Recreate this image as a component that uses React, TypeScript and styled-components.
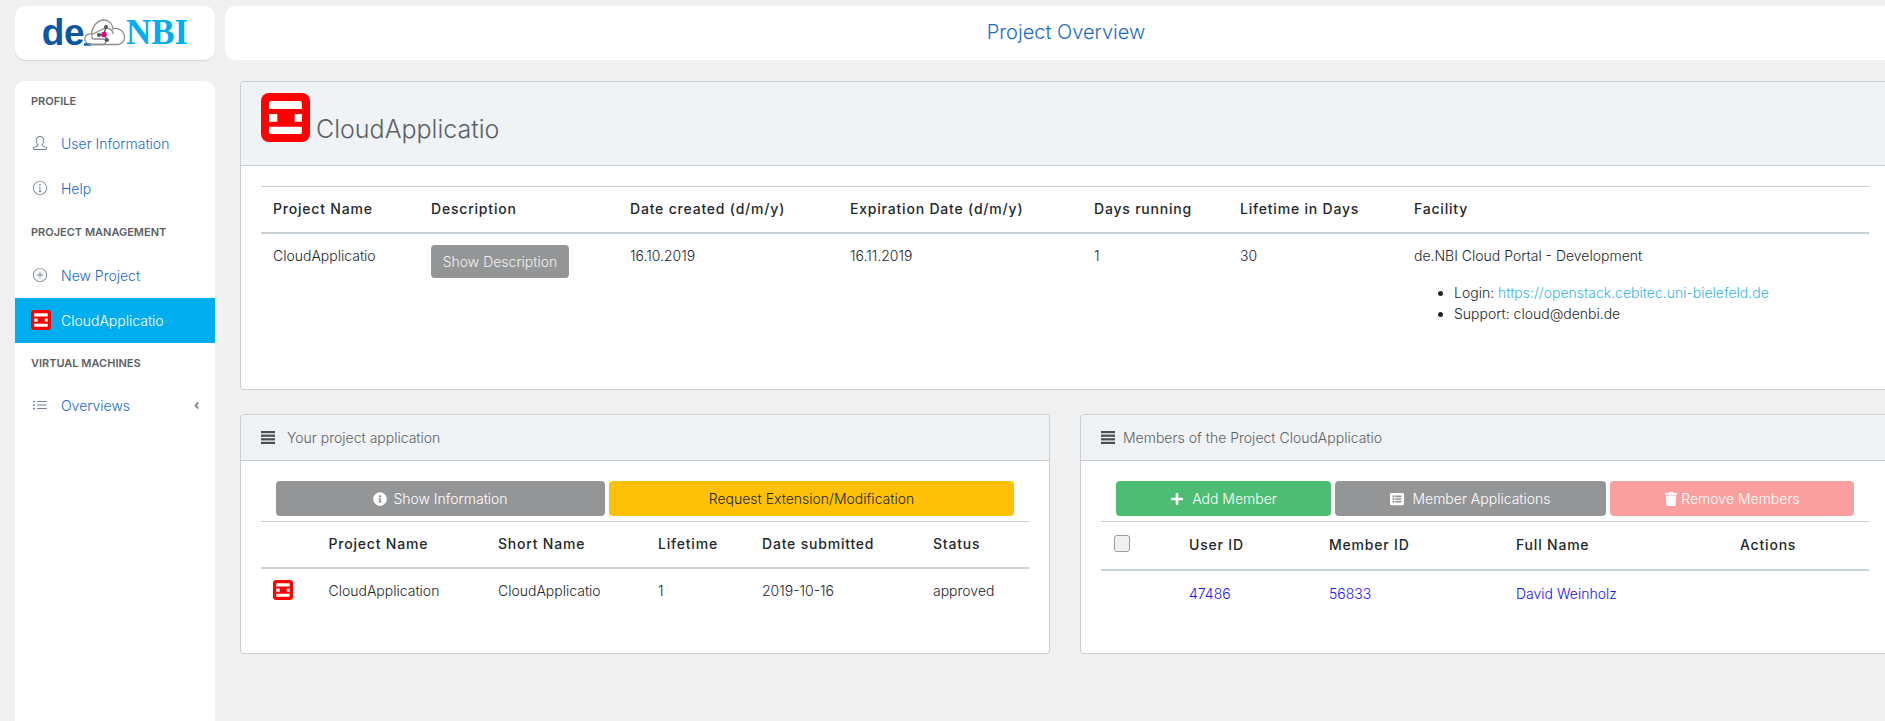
import React from "react";
import styled, {createGlobalStyle} from "styled-components";
import {SlUser, SlInfo, SlPlus, SlList} from "react-icons/sl";
import {FaInfoCircle, FaPlus, FaListAlt, FaTrash, FaAngleLeft} from "react-icons/fa";

const GlobalStyle = createGlobalStyle`
    html, body {
        margin: 0;
        height: 100%;
        overflow: hidden;
        background: #f0f0f0;
        font-family: Inter, Lato, sans-serif;
        font-size: 14px;
        font-weight: 300;
        line-height: 21px;
        color: #23282c;
    }
`;

const Page = styled.div`
    width: 1885px;
    height: 721px;
    overflow: hidden;
`;

const TopBar = styled.header`
    display: flex;
    gap: 10px;
    padding: 6px 0 0 15px;
    height: 54px;
    margin-bottom: 21px;
`;

const LogoBox = styled.div`
    flex: 0 0 200px;
    display: flex;
    align-items: center;
    justify-content: center;
    padding-bottom: 2px;
    background: #fff;
    border-radius: 10px;
    box-shadow: 0 1px 1px #d3d7db;
`;

const LogoDe = styled.span`
    font-family: "Liberation Sans", sans-serif;
    font-weight: 700;
    font-size: 37px;
    letter-spacing: -0.5px;
    line-height: 1;
    color: #0b57a4;
`;

const LogoNbi = styled.span`
    font-family: "Liberation Serif", serif;
    font-weight: 700;
    font-size: 35px;
    line-height: 1;
    color: #00aeef;
`;

const TitleBox = styled.div`
    flex: 0 0 1682px;
    display: flex;
    align-items: center;
    justify-content: center;
    padding-bottom: 2px;
    box-sizing: border-box;
    background: #fff;
    border-radius: 10px 0 0 10px;
    font-size: 20px;
    color: #1a6bc4;
`;

const Body = styled.div`
    display: flex;
    gap: 25px;
    padding-left: 15px;
`;

const Sidebar = styled.nav`
    flex: 0 0 200px;
    height: 640px;
    background: #fff;
    border-radius: 10px 10px 0 0;
`;

const NavTitle = styled.div<{$tall?: boolean}>`
    height: ${p => (p.$tall ? 42 : 40)}px;
    display: flex;
    align-items: center;
    padding-left: 16px;
    font-size: 11px;
    font-weight: 600;
    text-transform: uppercase;
    color: #5c5f63;
`;

const NavItem = styled.a<{$active?: boolean}>`
    height: 45px;
    box-sizing: border-box;
    display: flex;
    align-items: center;
    padding: 0 16px 1px;
    color: ${p => (p.$active ? "#fff" : "#1a6bc4")};
    background: ${p => (p.$active ? "#00aeef" : "transparent")};
`;

const NavIcon = styled.span`
    flex: 0 0 30px;
    display: flex;
    align-items: center;
    padding-left: 2px;
    box-sizing: border-box;
    font-size: 14px;
    color: #73818f;
`;

const NavBadge = styled(NavIcon)`
    padding-left: 0;
`;

const NavCaret = styled.span`
    margin: 0 -3px 0 auto;
    display: flex;
    font-size: 11px;
    color: #73818f;
`;

const Content = styled.main`
    flex: 0 0 1650px;
`;

const Card = styled.section`
    background: #fff;
    border: 1px solid #c8ced3;
    border-radius: 4px;
    box-sizing: border-box;
`;

const ProjectHeader = styled.div`
    height: 84px;
    box-sizing: border-box;
    padding: 11px 20px 0;
    display: flex;
    align-items: flex-start;
    gap: 6px;
    background: #f0f3f5;
    border-bottom: 1px solid #c8ced3;
    border-radius: 4px 4px 0 0;
`;

const ProjectName = styled.h3`
    margin: 22px 0 0;
    font-size: 25px;
    font-weight: 300;
    line-height: 29px;
    color: #5c6165;
`;

const CardBody = styled.div`
    padding: 20px 20px 0;
`;

const SmallHeader = styled.div<{$gap: number}>`
    height: 46px;
    box-sizing: border-box;
    padding-left: 20px;
    display: flex;
    align-items: center;
    gap: ${p => p.$gap}px;
    background: #f0f3f5;
    border-bottom: 1px solid #c8ced3;
    border-radius: 4px 4px 0 0;
    color: #5c6165;
`;

const Columns = styled.div`
    display: grid;
    grid-template-columns: 810px 810px;
    gap: 30px;
    margin-top: 24px;
    align-items: start;
`;

const ButtonRow = styled.div<{$cols: string}>`
    display: grid;
    grid-template-columns: ${p => p.$cols};
    gap: 4px;
    padding: 0 15px;
    margin-bottom: 5px;
`;

const ActionButton = styled.button<{$bg: string; $fg?: string; $gap?: number}>`
    height: 35px;
    border: 0;
    border-radius: 4px;
    display: flex;
    align-items: center;
    justify-content: center;
    gap: ${p => p.$gap ?? 6}px;
    font: inherit;
    background: ${p => p.$bg};
    color: ${p => p.$fg ?? "#fff"};
`;

const DescriptionButton = styled.button`
    display: block;
    width: 138px;
    height: 33px;
    padding: 0;
    border: 0;
    border-radius: 4px;
    font: inherit;
    background: #949596;
    color: #f2f2f2;
`;

const Table = styled.table<{$after: number}>`
    width: 100%;
    table-layout: fixed;
    border-collapse: collapse;
    margin-bottom: ${p => p.$after}px;
    th {
        padding: 11px 12px 13px;
        text-align: left;
        font-weight: 500;
        letter-spacing: 0.8px;
        border-top: 1px solid #c8ced3;
        border-bottom: 2px solid #c8d2d8;
    }
    td {
        padding: 11px 12px 13px;
        vertical-align: top;
    }
`;

const Col = styled.col<{$w: number}>`
    width: ${p => p.$w}px;
`;

const FacilityList = styled.ul`
    margin: 16px 0 16px;
    padding-left: 40px;
`;

const LoginLink = styled.a`
    color: #3cb4e0;
`;

const MemberLink = styled.a`
    color: #1a0dff;
`;

const MemberCell = styled.td`
    && {
        padding-top: 12px;
    }
`;

const Checkbox = styled.input.attrs({type: "checkbox"})`
    appearance: none;
    display: block;
    width: 16px;
    height: 17px;
    margin: 2px 0 4px 1px;
    background: #eef0f2;
    border: 1px solid #9a9ea2;
    border-radius: 3px;
`;

const StackSvg = styled.svg<{$size: number}>`
    display: block;
    flex: none;
    width: ${p => p.$size}px;
    height: ${p => p.$size}px;
`;

const StackIcon = ({size}: {size: number}) => (
    <StackSvg $size={size} viewBox="0 0 49 49">
        <rect width="49" height="49" rx="8" fill="#ff0000" />
        <path fill="#fff" d="M10 8H39a2 2 0 0 1 2 2V16H8V10a2 2 0 0 1 2-2Z" />
        <path fill="#fff" d="M8 21H16.3V28.7H8ZM33.7 21H41V28.7H33.7Z" />
        <path fill="#fff" d="M8 33.7H41V39a2 2 0 0 1-2 2H10a2 2 0 0 1-2-2Z" />
    </StackSvg>
);

const BarsIcon = () => (
    <svg width="14" height="13" viewBox="0 0 14 13" fill="#4c4f52">
        <rect width="14" height="2.2" />
        <rect y="3.6" width="14" height="2.2" />
        <rect y="7.2" width="14" height="2.2" />
        <rect y="10.8" width="14" height="2.2" />
    </svg>
);

const CloudMark = () => (
    <svg width="42" height="27" viewBox="0 0 42 27" fill="none" stroke="#8d8d8d" strokeWidth="1.3">
        <path d="M-6 25.5H7" stroke="#0b57a4" strokeWidth="2.5" />
        <path d="M7 25.5C2 25.5 0.6 21.5 1 19C1.5 16 4.5 14.5 7.5 15C8 8 13 1 20 1C25 1 28.5 5 29 10C34 8 40.5 12 40.5 18.5C40.5 23 37 25.5 33 25.5Z" />
        <path d="M7 25.5H19C22.5 25.5 22.5 20 19 20H10C7.5 20 7 16 9 15L19 10C23 8 29 10 29 15" />
        <circle cx="15" cy="16" r="2" fill="#555" stroke="none" />
        <circle cx="22" cy="8" r="2" fill="#555" stroke="none" />
        <circle cx="23" cy="21" r="2" fill="#555" stroke="none" />
        <path d="M15 16H20M20 15L22 8M20 15L23 21" stroke="#555" />
        <circle cx="20" cy="15.5" r="2.8" fill="#e5007d" stroke="none" />
    </svg>
);

const App = () => {
    return (
        <Page>
            <GlobalStyle />
            <TopBar>
                <LogoBox>
                    <LogoDe>de</LogoDe>
                    <CloudMark />
                    <LogoNbi>NBI</LogoNbi>
                </LogoBox>
                <TitleBox>Project Overview</TitleBox>
            </TopBar>
            <Body>
                <Sidebar>
                    <NavTitle>Profile</NavTitle>
                    <NavItem><NavIcon><SlUser /></NavIcon>User Information</NavItem>
                    <NavItem><NavIcon><SlInfo /></NavIcon>Help</NavItem>
                    <NavTitle $tall>Project Management</NavTitle>
                    <NavItem><NavIcon><SlPlus /></NavIcon>New Project</NavItem>
                    <NavItem $active><NavBadge><StackIcon size={20} /></NavBadge>CloudApplicatio</NavItem>
                    <NavTitle>Virtual Machines</NavTitle>
                    <NavItem>
                        <NavIcon><SlList /></NavIcon>Overviews
                        <NavCaret><FaAngleLeft /></NavCaret>
                    </NavItem>
                </Sidebar>
                <Content>
                    <Card>
                        <ProjectHeader>
                            <StackIcon size={49} />
                            <ProjectName>CloudApplicatio</ProjectName>
                        </ProjectHeader>
                        <CardBody>
                            <Table $after={36}>
                                <colgroup>
                                    <Col $w={158} /><Col $w={199} /><Col $w={220} /><Col $w={244} />
                                    <Col $w={146} /><Col $w={174} /><Col $w={467} />
                                </colgroup>
                                <thead>
                                    <tr>
                                        <th>Project Name</th>
                                        <th>Description</th>
                                        <th>Date created (d/m/y)</th>
                                        <th>Expiration Date (d/m/y)</th>
                                        <th>Days running</th>
                                        <th>Lifetime in Days</th>
                                        <th>Facility</th>
                                    </tr>
                                </thead>
                                <tbody>
                                    <tr>
                                        <td>CloudApplicatio</td>
                                        <td><DescriptionButton>Show Description</DescriptionButton></td>
                                        <td>16.10.2019</td>
                                        <td>16.11.2019</td>
                                        <td>1</td>
                                        <td>30</td>
                                        <td>
                                            de.NBI Cloud Portal - Development
                                            <FacilityList>
                                                <li>Login: <LoginLink>https://openstack.cebitec.uni-bielefeld.de</LoginLink></li>
                                                <li>Support: cloud@denbi.de</li>
                                            </FacilityList>
                                        </td>
                                    </tr>
                                </tbody>
                            </Table>
                        </CardBody>
                    </Card>
                    <Columns>
                        <Card>
                            <SmallHeader $gap={12}><BarsIcon />Your project application</SmallHeader>
                            <CardBody>
                                <ButtonRow $cols="329px 405px">
                                    <ActionButton $bg="#949596"><FaInfoCircle />Show Information</ActionButton>
                                    <ActionButton $bg="#ffc107" $fg="#23282c">Request Extension/Modification</ActionButton>
                                </ButtonRow>
                                <Table $after={39}>
                                    <colgroup>
                                        <Col $w={55.5} /><Col $w={169.5} /><Col $w={160} /><Col $w={104} />
                                        <Col $w={171} /><Col $w={108} />
                                    </colgroup>
                                    <thead>
                                        <tr>
                                            <th></th>
                                            <th>Project Name</th>
                                            <th>Short Name</th>
                                            <th>Lifetime</th>
                                            <th>Date submitted</th>
                                            <th>Status</th>
                                        </tr>
                                    </thead>
                                    <tbody>
                                        <tr>
                                            <td><StackIcon size={20} /></td>
                                            <td>CloudApplication</td>
                                            <td>CloudApplicatio</td>
                                            <td>1</td>
                                            <td>2019-10-16</td>
                                            <td>approved</td>
                                        </tr>
                                    </tbody>
                                </Table>
                            </CardBody>
                        </Card>
                        <Card>
                            <SmallHeader $gap={8}><BarsIcon />Members of the Project CloudApplicatio</SmallHeader>
                            <CardBody>
                                <ButtonRow $cols="215px 271px 244px">
                                    <ActionButton $bg="#4dbd74" $gap={8}><FaPlus />Add Member</ActionButton>
                                    <ActionButton $bg="#949596" $gap={8}><FaListAlt />Member Applications</ActionButton>
                                    <ActionButton $bg="#fb9f9e" $gap={3}><FaTrash />Remove Members</ActionButton>
                                </ButtonRow>
                                <Table $after={36}>
                                    <colgroup>
                                        <Col $w={76} /><Col $w={140} /><Col $w={187} /><Col $w={224} /><Col $w={141} />
                                    </colgroup>
                                    <thead>
                                        <tr>
                                            <th><Checkbox /></th>
                                            <th>User ID</th>
                                            <th>Member ID</th>
                                            <th>Full Name</th>
                                            <th>Actions</th>
                                        </tr>
                                    </thead>
                                    <tbody>
                                        <tr>
                                            <td></td>
                                            <MemberCell><MemberLink>47486</MemberLink></MemberCell>
                                            <MemberCell><MemberLink>56833</MemberLink></MemberCell>
                                            <MemberCell><MemberLink>David Weinholz</MemberLink></MemberCell>
                                            <td></td>
                                        </tr>
                                    </tbody>
                                </Table>
                            </CardBody>
                        </Card>
                    </Columns>
                </Content>
            </Body>
        </Page>
    );
};

export default App;
